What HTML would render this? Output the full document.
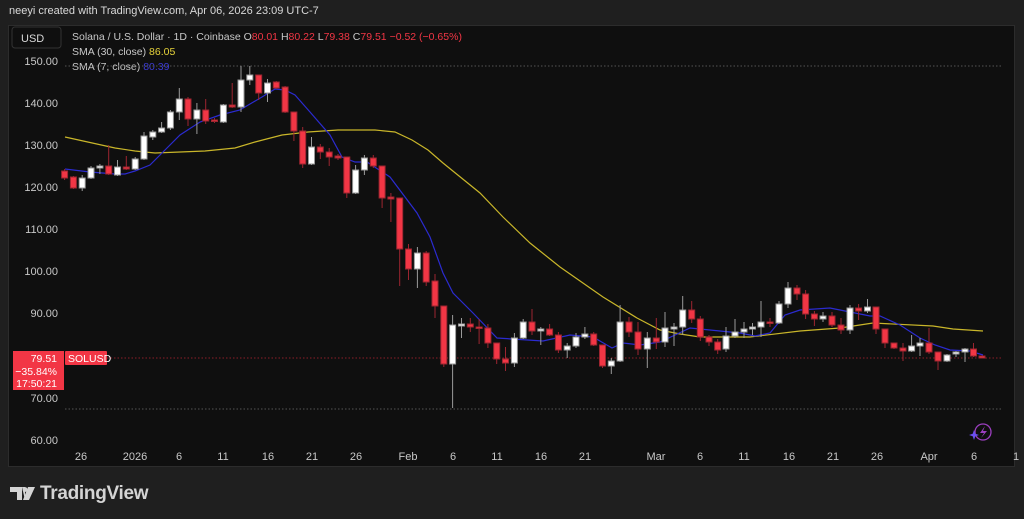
<!DOCTYPE html>
<html><head><meta charset="utf-8"><style>
html,body{margin:0;padding:0;background:#1f1f1f;width:1024px;height:519px;overflow:hidden;font-family:"Liberation Sans","DejaVu Sans",sans-serif}
.top{position:absolute;left:9px;top:5px;color:#d9d9d9;font-size:11px}
.panel{position:absolute;left:8px;top:25px;width:1007px;height:442px;background:#0f0f0f;border:1px solid #2c2c2c;box-sizing:border-box}
svg{position:absolute;left:0;top:0}
.logo{position:absolute;left:10px;top:483px;color:#d4d4d4;font-size:19px;font-weight:bold;letter-spacing:-0.3px}
</style></head><body>
<div class="top">neeyi created with TradingView.com, Apr 06, 2026 23:09 UTC-7</div>
<div class="panel"></div>
<svg width="1024" height="519" xmlns="http://www.w3.org/2000/svg" font-family="Liberation Sans, DejaVu Sans, sans-serif">
<rect x="12" y="27" width="49" height="21" rx="3" fill="#0f0f0f" stroke="#333"/>
<text x="21" y="42" fill="#d9d9d9" font-size="11">USD</text>
<text x="72" y="40" font-size="10.5" fill="#c8c8c8">Solana / U.S. Dollar · 1D · Coinbase <tspan>O</tspan><tspan fill="#f23645">80.01</tspan> H<tspan fill="#f23645">80.22</tspan> L<tspan fill="#f23645">79.38</tspan> C<tspan fill="#f23645">79.51</tspan> <tspan fill="#f23645">−0.52 (−0.65%)</tspan></text>
<text x="72" y="55" font-size="10.5" fill="#c8c8c8">SMA (30, close) <tspan fill="#e5d23a">86.05</tspan></text>
<text x="72" y="70" font-size="10.5" fill="#c8c8c8">SMA (7, close) <tspan fill="#3b3bd6">80.39</tspan></text>
<g fill="#c8c8c8" font-size="11" text-anchor="end">
<text x="58" y="65">150.00</text><text x="58" y="107">140.00</text><text x="58" y="149">130.00</text><text x="58" y="191">120.00</text><text x="58" y="233">110.00</text><text x="58" y="275">100.00</text><text x="58" y="317">90.00</text><text x="58" y="402">70.00</text><text x="58" y="444">60.00</text>
</g>
<line x1="65" y1="66" x2="1003" y2="66" stroke="#555" stroke-dasharray="1.5,2"/>
<line x1="65" y1="409" x2="1003" y2="409" stroke="#555" stroke-dasharray="1.5,2"/>
<line x1="65" y1="358" x2="1003" y2="358" stroke="#8b1e28" stroke-dasharray="1.5,2"/>
<g fill="#c8c8c8" font-size="11" text-anchor="middle">
<text x="81" y="460">26</text><text x="135" y="460">2026</text><text x="179" y="460">6</text><text x="223" y="460">11</text><text x="268" y="460">16</text><text x="312" y="460">21</text><text x="356" y="460">26</text><text x="408" y="460">Feb</text><text x="453" y="460">6</text><text x="497" y="460">11</text><text x="541" y="460">16</text><text x="585" y="460">21</text><text x="656" y="460">Mar</text><text x="700" y="460">6</text><text x="744" y="460">11</text><text x="789" y="460">16</text><text x="833" y="460">21</text><text x="877" y="460">26</text><text x="929" y="460">Apr</text><text x="974" y="460">6</text><text x="1016" y="460">1</text>
</g>
<polyline fill="none" stroke="#c9b62a" stroke-width="1.2" points="65,137 115,148 135,151 155,153 205,151 235,148 255,142 282,135 308,132 338,130 375,130 395,132 412,140 428,150 443,163 480,193 503,217 530,243 560,267 603,297 637,318 660,330 680,334 700,337 750,337 800,331 840,328 873,323 933,326 953,329 983,331"/>
<polyline fill="none" stroke="#2b2bd0" stroke-width="1.2" points="65,169 90,172 115,174 125,174 135,171 150,165 165,150 180,135 200,122 220,115 240,110 250,104 262,97 275,89 285,90 295,95 310,112 330,135 342,157 355,162 367,162 390,177 417,213 430,237 443,273 453,293 473,313 497,338 543,341 570,335 593,337 612,348 623,343 640,345 660,342 690,328 720,331 740,333 755,336 770,333 785,315 800,310 830,308 850,312 870,316 880,316 900,325 920,338 935,345 950,350 970,351 983,355"/>
<g id="c"></g>
<g stroke-width="1">
<!-- candles: red -->
<g stroke="#9c2530" fill="#f23645">
<line x1="64.6" y1="169" x2="64.6" y2="180"/><rect x="61.6" y="171" width="6" height="7"/>
<line x1="73.4" y1="176" x2="73.4" y2="189"/><rect x="70.4" y="177" width="6" height="11"/>
<line x1="108.7" y1="145" x2="108.7" y2="175"/><rect x="105.7" y="166" width="6" height="8"/>
<line x1="126.3" y1="156" x2="126.3" y2="170"/><rect x="123.3" y="167" width="6" height="2"/>
<line x1="188" y1="97" x2="188" y2="126"/><rect x="185" y="99" width="6" height="20"/>
<line x1="205.7" y1="99" x2="205.7" y2="124"/><rect x="202.7" y="110" width="6" height="11"/>
<line x1="214.5" y1="118" x2="214.5" y2="123"/><rect x="211.5" y="120" width="6" height="1.5"/>
<line x1="232.2" y1="83" x2="232.2" y2="108"/><rect x="229.2" y="105" width="6" height="2"/>
<line x1="258.7" y1="75" x2="258.7" y2="100"/><rect x="255.7" y="75" width="6" height="18"/>
<line x1="276.3" y1="81" x2="276.3" y2="89"/><rect x="273.3" y="82" width="6" height="6"/>
<line x1="285.1" y1="86" x2="285.1" y2="113"/><rect x="282.1" y="87" width="6" height="25"/>
<line x1="293.9" y1="112" x2="293.9" y2="141"/><rect x="290.9" y="112" width="6" height="19"/>
<line x1="302.7" y1="127" x2="302.7" y2="168"/><rect x="299.7" y="131" width="6" height="33"/>
<line x1="320.3" y1="144" x2="320.3" y2="159"/><rect x="317.3" y="147" width="6" height="5"/>
<line x1="329.2" y1="148" x2="329.2" y2="166"/><rect x="326.2" y="152" width="6" height="5"/>
<line x1="338" y1="154" x2="338" y2="160"/><rect x="335" y="156" width="6" height="2"/>
<line x1="346.8" y1="157" x2="346.8" y2="198"/><rect x="343.8" y="157" width="6" height="36"/>
<line x1="373.3" y1="155" x2="373.3" y2="168"/><rect x="370.3" y="158" width="6" height="8"/>
<line x1="382.1" y1="166" x2="382.1" y2="208"/><rect x="379.1" y="166" width="6" height="32"/>
<line x1="390.9" y1="193" x2="390.9" y2="222"/><rect x="387.9" y="197" width="6" height="2"/>
<line x1="399.7" y1="198" x2="399.7" y2="286"/><rect x="396.7" y="198" width="6" height="51"/>
<line x1="408.5" y1="244" x2="408.5" y2="280"/><rect x="405.5" y="249" width="6" height="20"/>
<line x1="426.2" y1="251" x2="426.2" y2="286"/><rect x="423.2" y="253" width="6" height="29"/>
<line x1="435" y1="274" x2="435" y2="318"/><rect x="432" y="281" width="6" height="25"/>
<line x1="443.8" y1="306" x2="443.8" y2="367"/><rect x="440.8" y="306" width="6" height="58"/>
<line x1="470.3" y1="318" x2="470.3" y2="332"/><rect x="467.3" y="324" width="6" height="3"/>
<line x1="479.1" y1="319" x2="479.1" y2="344"/><rect x="476.1" y="327" width="6" height="1.5"/>
<line x1="487.9" y1="324" x2="487.9" y2="348"/><rect x="484.9" y="328" width="6" height="15"/>
<line x1="496.7" y1="343" x2="496.7" y2="364"/><rect x="493.7" y="343" width="6" height="16"/>
<line x1="505.5" y1="347" x2="505.5" y2="371"/><rect x="502.5" y="359" width="6" height="4"/>
<line x1="532" y1="309" x2="532" y2="335"/><rect x="529" y="322" width="6" height="9"/>
<line x1="549.6" y1="324" x2="549.6" y2="336"/><rect x="546.6" y="329" width="6" height="6"/>
<line x1="558.4" y1="332" x2="558.4" y2="353"/><rect x="555.4" y="335" width="6" height="15"/>
<line x1="593.7" y1="332" x2="593.7" y2="346"/><rect x="590.7" y="334" width="6" height="11"/>
<line x1="602.5" y1="345" x2="602.5" y2="368"/><rect x="599.5" y="345" width="6" height="21"/>
<line x1="629" y1="317" x2="629" y2="337"/><rect x="626" y="322" width="6" height="10"/>
<line x1="638" y1="322" x2="638" y2="355"/><rect x="635" y="332" width="6" height="17"/>
<line x1="656.3" y1="318" x2="656.3" y2="349"/><rect x="653.3" y="338" width="6" height="4"/>
<line x1="691.7" y1="301" x2="691.7" y2="323"/><rect x="688.7" y="310" width="6" height="9"/>
<line x1="700.3" y1="316" x2="700.3" y2="341"/><rect x="697.3" y="319" width="6" height="18"/>
<line x1="709" y1="335" x2="709" y2="346"/><rect x="706" y="337" width="6" height="5"/>
<line x1="717.7" y1="339" x2="717.7" y2="354"/><rect x="714.7" y="342" width="6" height="8"/>
<line x1="770" y1="318" x2="770" y2="327"/><rect x="767" y="322" width="6" height="1.5"/>
<line x1="797" y1="285" x2="797" y2="300"/><rect x="794" y="288" width="6" height="6"/>
<line x1="805.6" y1="290" x2="805.6" y2="319"/><rect x="802.6" y="294" width="6" height="20"/>
<line x1="814.4" y1="311" x2="814.4" y2="326"/><rect x="811.4" y="314" width="6" height="5"/>
<line x1="832" y1="312" x2="832" y2="327"/><rect x="829" y="316" width="6" height="9"/>
<line x1="841" y1="318" x2="841" y2="334"/><rect x="838" y="325" width="6" height="5"/>
<line x1="858.6" y1="304" x2="858.6" y2="320"/><rect x="855.6" y="308" width="6" height="3"/>
<line x1="876" y1="307" x2="876" y2="334"/><rect x="873" y="307" width="6" height="22"/>
<line x1="885" y1="329" x2="885" y2="348"/><rect x="882" y="329" width="6" height="14"/>
<line x1="894" y1="343" x2="894" y2="349"/><rect x="891" y="343" width="6" height="5"/>
<line x1="903" y1="343" x2="903" y2="361"/><rect x="900" y="348" width="6" height="3"/>
<line x1="929" y1="328" x2="929" y2="354"/><rect x="926" y="343" width="6" height="9"/>
<line x1="938" y1="352" x2="938" y2="370"/><rect x="935" y="352" width="6" height="9"/>
<line x1="973.5" y1="343" x2="973.5" y2="357"/><rect x="970.5" y="349" width="6" height="7"/>
<rect x="979" y="356" width="6" height="2"/>
</g>
<g stroke="#9a9a9a" fill="#ffffff">
<line x1="82.2" y1="175" x2="82.2" y2="191"/><rect x="79.2" y="178" width="6" height="10"/>
<line x1="91" y1="166" x2="91" y2="179"/><rect x="88" y="168" width="6" height="10"/>
<line x1="99.9" y1="164" x2="99.9" y2="174"/><rect x="96.9" y="166" width="6" height="2"/>
<line x1="117.5" y1="160" x2="117.5" y2="176"/><rect x="114.5" y="167" width="6" height="8"/>
<line x1="135.2" y1="157" x2="135.2" y2="170"/><rect x="132.2" y="159" width="6" height="10"/>
<line x1="144" y1="132" x2="144" y2="160"/><rect x="141" y="136" width="6" height="23"/>
<line x1="152.8" y1="130" x2="152.8" y2="140"/><rect x="149.8" y="132" width="6" height="5"/>
<line x1="161.6" y1="122" x2="161.6" y2="133"/><rect x="158.6" y="128" width="6" height="4"/>
<line x1="170.4" y1="110" x2="170.4" y2="130"/><rect x="167.4" y="112" width="6" height="16"/>
<line x1="179.3" y1="88" x2="179.3" y2="120"/><rect x="176.3" y="99" width="6" height="13"/>
<line x1="196.9" y1="103" x2="196.9" y2="134"/><rect x="193.9" y="110" width="6" height="9"/>
<line x1="223.4" y1="104" x2="223.4" y2="123"/><rect x="220.4" y="105" width="6" height="17"/>
<line x1="241" y1="66" x2="241" y2="112"/><rect x="238" y="80" width="6" height="27"/>
<line x1="249.8" y1="66" x2="249.8" y2="85"/><rect x="246.8" y="75" width="6" height="5"/>
<line x1="267.5" y1="79" x2="267.5" y2="102"/><rect x="264.5" y="83" width="6" height="10"/>
<line x1="311.5" y1="137" x2="311.5" y2="165"/><rect x="308.5" y="147" width="6" height="17"/>
<line x1="355.6" y1="165" x2="355.6" y2="194"/><rect x="352.6" y="170" width="6" height="23"/>
<line x1="364.4" y1="155" x2="364.4" y2="175"/><rect x="361.4" y="158" width="6" height="12"/>
<line x1="417.4" y1="247" x2="417.4" y2="288"/><rect x="414.4" y="253" width="6" height="16"/>
<line x1="452.6" y1="315" x2="452.6" y2="408"/><rect x="449.6" y="325" width="6" height="39"/>
<line x1="461.5" y1="318" x2="461.5" y2="338"/><rect x="458.5" y="324" width="6" height="2"/>
<line x1="514.4" y1="333" x2="514.4" y2="367"/><rect x="511.4" y="338" width="6" height="25"/>
<line x1="523.2" y1="319" x2="523.2" y2="339"/><rect x="520.2" y="322" width="6" height="16"/>
<line x1="540.8" y1="327" x2="540.8" y2="345"/><rect x="537.8" y="329" width="6" height="2"/>
<line x1="567.2" y1="343" x2="567.2" y2="358"/><rect x="564.2" y="346" width="6" height="4"/>
<line x1="576" y1="333" x2="576" y2="348"/><rect x="573" y="337" width="6" height="9"/>
<line x1="584.9" y1="327" x2="584.9" y2="339"/><rect x="581.9" y="334" width="6" height="3"/>
<line x1="611.3" y1="358" x2="611.3" y2="374"/><rect x="608.3" y="361" width="6" height="5"/>
<line x1="620.1" y1="305" x2="620.1" y2="362"/><rect x="617.1" y="322" width="6" height="39"/>
<line x1="647.3" y1="332" x2="647.3" y2="368"/><rect x="644.3" y="338" width="6" height="11"/>
<line x1="665" y1="312" x2="665" y2="347"/><rect x="662" y="328" width="6" height="14"/>
<line x1="674" y1="323" x2="674" y2="346"/><rect x="671" y="327" width="6" height="2"/>
<line x1="682.7" y1="296" x2="682.7" y2="335"/><rect x="679.7" y="310" width="6" height="17"/>
<line x1="726" y1="327" x2="726" y2="352"/><rect x="723" y="336" width="6" height="13"/>
<line x1="735" y1="319" x2="735" y2="338"/><rect x="732" y="332" width="6" height="4"/>
<line x1="744" y1="322" x2="744" y2="338"/><rect x="741" y="329" width="6" height="3"/>
<line x1="752.5" y1="323" x2="752.5" y2="335"/><rect x="749.5" y="327" width="6" height="2"/>
<line x1="761" y1="301" x2="761" y2="337"/><rect x="758" y="322" width="6" height="5"/>
<line x1="779" y1="301" x2="779" y2="324"/><rect x="776" y="304" width="6" height="19"/>
<line x1="788" y1="282" x2="788" y2="308"/><rect x="785" y="288" width="6" height="16"/>
<line x1="823" y1="312" x2="823" y2="322"/><rect x="820" y="316" width="6" height="3"/>
<line x1="850" y1="305" x2="850" y2="334"/><rect x="847" y="308" width="6" height="22"/>
<line x1="867.5" y1="299" x2="867.5" y2="313"/><rect x="864.5" y="307" width="6" height="4"/>
<line x1="911.6" y1="335" x2="911.6" y2="352"/><rect x="908.6" y="346" width="6" height="5"/>
<line x1="920" y1="338" x2="920" y2="356"/><rect x="917" y="343" width="6" height="3"/>
<line x1="947" y1="354" x2="947" y2="362"/><rect x="944" y="355" width="6" height="6"/>
<line x1="956" y1="351" x2="956" y2="357"/><rect x="953" y="352" width="6" height="2"/>
<line x1="965" y1="348" x2="965" y2="362"/><rect x="962" y="349" width="6" height="3"/>
</g>
</g>
<rect x="13" y="351" width="51" height="39" fill="#f23645"/>
<g fill="#fff" font-size="10.5" text-anchor="end"><text x="57" y="362">79.51</text><text x="57" y="375">−35.84%</text><text x="57" y="387">17:50:21</text></g>
<rect x="65" y="351" width="42" height="14" rx="1" fill="#f23645"/>
<text x="68" y="362" fill="#fff" font-size="10.5">SOLUSD</text>
<circle cx="983" cy="432" r="8" fill="none" stroke="#9c3fc0" stroke-width="1.3"/>
<path d="M985,426 L980,433 L984,433 L981,438 L987,431 L983,431 Z" fill="#9c3fc0"/>
<path d="M974,430 L975.3,433.7 L979,435 L975.3,436.3 L974,440 L972.7,436.3 L969,435 L972.7,433.7 Z" fill="#6a4ff0"/>
<path d="M10,487 h12 v13 h-5 v-8 h-7 z M22,487 h3 v13 z" fill="#d4d4d4"/>
<circle cx="25" cy="489.5" r="2.4" fill="#d4d4d4"/>
<path d="M28,487 h7 l-6,13 h-6 z" fill="#d4d4d4"/>
</svg>
<div class="logo" style="left:40px">TradingView</div>
</body></html>
